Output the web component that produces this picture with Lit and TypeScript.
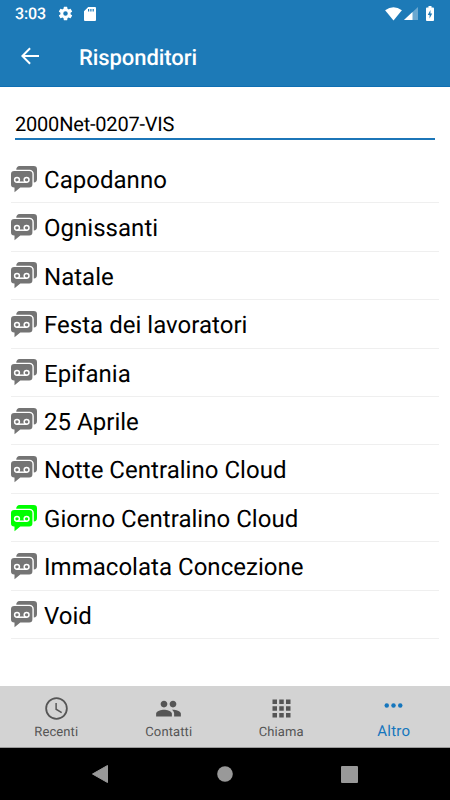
import { LitElement, html, css, svg } from "lit";
import { customElement } from "lit/decorators.js";
import { classMap } from "lit/directives/class-map.js";

const gear = svg`<path d="M19.14 12.94c.04-.3.06-.61.06-.94s-.02-.64-.07-.94l2.03-1.58a.49.49 0 0 0 .12-.61l-1.92-3.32a.49.49 0 0 0-.59-.22l-2.39.96a7 7 0 0 0-1.62-.94l-.36-2.54a.48.48 0 0 0-.48-.41h-3.84a.47.47 0 0 0-.47.41l-.36 2.54c-.59.24-1.13.57-1.62.94l-2.39-.96a.48.48 0 0 0-.59.22L2.74 8.87a.47.47 0 0 0 .12.61l2.03 1.58a6 6 0 0 0 0 1.88l-2.03 1.58a.49.49 0 0 0-.12.61l1.92 3.32c.12.22.37.29.59.22l2.39-.96c.5.38 1.03.7 1.62.94l.36 2.54c.05.24.24.41.48.41h3.84c.24 0 .44-.17.47-.41l.36-2.54a7 7 0 0 0 1.62-.94l2.39.96c.22.08.47 0 .59-.22l1.92-3.32a.47.47 0 0 0-.12-.61zM12 15.2a3.2 3.2 0 1 1 0-6.4 3.2 3.2 0 0 1 0 6.4z"/>`;
const clock = svg`<path d="M11.99 2C6.47 2 2 6.48 2 12s4.47 10 9.99 10C17.52 22 22 17.52 22 12S17.52 2 11.99 2zM12 20.4a8.4 8.4 0 1 1 0-16.8 8.4 8.4 0 0 1 0 16.8z"/><path d="M12.3 7h-1.3v6l5.25 3.15.7-1.15-4.65-2.75z"/>`;
const people = svg`<path d="M16 11c1.66 0 2.99-1.34 2.99-3S17.66 5 16 5s-3 1.34-3 3 1.34 3 3 3zm-8 0c1.66 0 2.99-1.34 2.99-3S9.66 5 8 5 5 6.34 5 8s1.34 3 3 3zm0 2c-2.33 0-7 1.17-7 3.5V19h14v-2.5C15 14.17 10.33 13 8 13zm8 0c-.29 0-.62.02-.97.05 1.16.84 1.97 1.97 1.97 3.45V19h6v-2.5c0-2.33-4.67-3.5-7-3.5z"/>`;
const keypad = svg`<path d="M4 8h4V4H4v4zm6 12h4v-4h-4v4zm-6 0h4v-4H4v4zm0-6h4v-4H4v4zm6 0h4v-4h-4v4zm6-10v4h4V4h-4zm-6 4h4V4h-4v4zm6 6h4v-4h-4v4zm0 6h4v-4h-4v4z"/>`;
const dots = svg`<circle cx="6" cy="12" r="2"/><circle cx="12" cy="12" r="2"/><circle cx="18" cy="12" r="2"/>`;

@customElement("voicemail-icon")
class VoicemailIcon extends LitElement {
  static styles = css`
    :host { display: block; width: 27px; height: 27px; }
    svg { display: block; width: 100%; height: 100%; }
    .fill { fill: currentColor; }
    .line { fill: none; stroke: #fff; stroke-width: 1.5; }
  `;
  render() {
    return html`<svg viewBox="0 0 27 27">
      <path class="fill" d="M8.500 0h14.200a3.300 3.300 0 0 1 3.300 3.300v9.700a3.500 3.500 0 0 1-3.200 3.500V8a4.200 4.200 0 0 0-4.200-4.200H5.300A3.300 3.300 0 0 1 8.500 0z"/>
      <path class="fill" d="M3.200 4.900h15a3.200 3.200 0 0 1 3.200 3.200v10.200a3.200 3.200 0 0 1-3.200 3.200H9.300L3.500 26.200v-4.700h-.3A3.200 3.200 0 0 1 0 18.300V8.100a3.200 3.200 0 0 1 3.200-3.200z"/>
      <circle class="line" cx="6" cy="13.800" r="2.400"/>
      <circle class="line" cx="15.600" cy="13.800" r="2.400"/>
      <path class="line" d="M6 16.200h9.600"/>
    </svg>`;
  }
}

@customElement("app-root")
class AppRoot extends LitElement {
  static styles = css`
    :host { display: flex; flex-direction: column; width: 450px; height: 800px; background: #fff; color: #000; font-family: Roboto, sans-serif; overflow: hidden; text-rendering: geometricPrecision; }
    svg { display: block; fill: currentColor; flex: none; }
    .top { height: 87px; background: #1d7ab7; color: #fff; flex: none; box-sizing: border-box; border-bottom: 1px solid #0f6fb3; }
    .status { height: 27px; display: flex; align-items: center; padding: 0 16px 0 15px; }
    .time { font-size: 16px; font-weight: 500; letter-spacing: -.1px; width: 42px; line-height: 27px; }
    .gear { width: 17px; height: 17px; margin-right: 10px; }
    .sd { width: 12px; height: 14px; }
    .gap { flex: 1; }
    .wifi { width: 17px; height: 14px; margin-right: 2px; }
    .signal { width: 14px; height: 13px; margin-right: 8px; }
    .battery { width: 8px; height: 15px; }
    .bar { display: flex; align-items: center; height: 59px; padding-left: 18px; }
    .back { width: 24px; height: 24px; margin-top: -1px; }
    h1 { margin: 4px 0 0 37px; font-size: 22px; font-weight: 500; line-height: 30px; letter-spacing: -.07px; }
    .field { margin: 22px 15.500px 0 15px; height: 29px; border-bottom: 2px solid #1c76b8; font-size: 20px; letter-spacing: -.2px; line-height: 30px; flex: none; }
    .list { margin: 14.800px 11px 0; padding: 0; list-style: none; flex: 1; }
    .row { box-sizing: border-box; height: 48.440px; border-bottom: 1px solid #efefef; display: flex; align-items: center; font-size: 24px; letter-spacing: .03px; }
    voicemail-icon { color: #747474; margin: 1px 6px 0 0; }
    .label { padding-top: 2.500px; line-height: 30px; white-space: nowrap; }
    .active voicemail-icon { color: #0f0; }
    .tabs { height: 62px; box-sizing: border-box; border-bottom: 1px solid #999; background: #d3d3d3; display: grid; grid-template-columns: repeat(4, 1fr); flex: none; color: #555; }
    .tab { display: flex; flex-direction: column; align-items: center; font-size: 13px; letter-spacing: .1px; line-height: 18px; }
    .tab svg { width: 27px; height: 27px; margin: 8.500px 0 2px; }
    .tab.on { color: #1576bd; font-size: 15px; letter-spacing: .2px; }
    .tab.on svg { margin: 6px 0 3px; }
    .nav { height: 52px; background: #000; color: #999; display: flex; justify-content: center; align-items: center; gap: 108px; padding-right: 1px; flex: none; }
  `;

  private names = ["Capodanno", "Ognissanti", "Natale", "Festa dei lavoratori", "Epifania", "25 Aprile", "Notte Centralino Cloud", "Giorno Centralino Cloud", "Immacolata Concezione", "Void"];
  private tabs = [
    { label: "Recenti", icon: clock },
    { label: "Contatti", icon: people },
    { label: "Chiama", icon: keypad },
    { label: "Altro", icon: dots },
  ];

  render() {
    return html`
      <header class="top">
        <div class="status">
          <span class="time">3:03</span>
          <svg class="gear" viewBox="0 0 24 24">${gear}</svg>
          <svg class="sd" viewBox="0 0 12 14"><path fill-rule="evenodd" d="M4.200 0H11a1 1 0 0 1 1 1v12a1 1 0 0 1-1 1H1a1 1 0 0 1-1-1V4.200zM4 2v2.500h1.200V2zm2.300 0v2.500h1.200V2zm2.300 0v2.500h1.200V2z"/></svg>
          <span class="gap"></span>
          <svg class="wifi" viewBox="0 0 18 15"><path d="M0 3.500Q9-3 18 3.500L9 14.500z"/></svg>
          <svg class="signal" viewBox="0 0 14 13"><path d="M14 0v13H0z" opacity=".35"/><path d="M8.500 5.100V13H0z"/></svg>
          <svg class="battery" viewBox="0 0 9 15" preserveAspectRatio="none"><path fill-rule="evenodd" d="M2.800 0h3.400v1.500H8a1 1 0 0 1 1 1V14a1 1 0 0 1-1 1H1a1 1 0 0 1-1-1V2.500a1 1 0 0 1 1-1h1.800zM5 4L2 9h2v3.500L7 7.500H5z"/></svg>
        </div>
        <div class="bar">
          <svg class="back" viewBox="0 0 24 24"><path d="M21 11H6.800l6-6.100-1.400-1.400L3 12l8.400 8.500 1.400-1.400-6-6.100H21z"/></svg>
          <h1>Risponditori</h1>
        </div>
      </header>
      <div class="field">2000Net-0207-VIS</div>
      <ul class="list">
        ${this.names.map((name, i) => html`<li class=${classMap({ row: true, active: i === 7 })}><voicemail-icon></voicemail-icon><span class="label">${name}</span></li>`)}
      </ul>
      <nav class="tabs">
        ${this.tabs.map((tab, i) => html`<div class=${classMap({ tab: true, on: i === 3 })}><svg viewBox="0 0 24 24">${tab.icon}</svg><span>${tab.label}</span></div>`)}
      </nav>
      <div class="nav">
        <svg width="17" height="20" viewBox="0 0 17 20"><path d="M15.500 1.500v17L.500 10z" stroke="currentColor" stroke-linejoin="round"/></svg>
        <svg width="16" height="16" viewBox="0 0 16 16"><circle cx="8" cy="8" r="7.800"/></svg>
        <svg width="17" height="17" viewBox="0 0 17 17"><rect width="17" height="17" rx="1"/></svg>
      </div>
    `;
  }
}
